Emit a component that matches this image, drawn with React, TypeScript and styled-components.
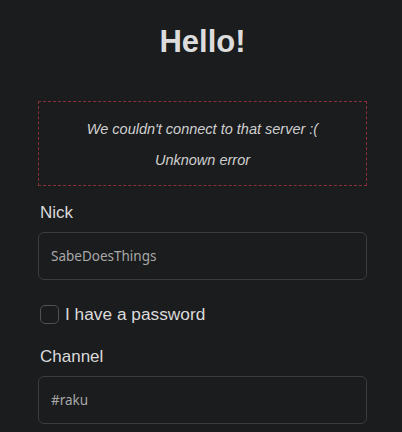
import React from "react";
import styled, { createGlobalStyle } from "styled-components";

const Global = createGlobalStyle`
  html, body { margin: 0; padding: 0; background: #1b1c1e; }
  body { font-family: "Liberation Sans", Arial, sans-serif; color: #d9d9d9; }
`;

const Page = styled.div`
  width: 329px;
  padding: 0 35px 0 38px;
  display: flex;
  flex-direction: column;
`;

const Title = styled.h1`
  margin: 26px 0 0;
  height: 32px;
  line-height: 32px;
  font-size: 31px;
  font-weight: 700;
  text-align: center;
  color: #dcdcdc;
`;

const ErrorBox = styled.div`
  margin-top: 43px;
  height: 85px;
  box-sizing: border-box;
  padding-top: 2px;
  border: 1px dashed #8a2f3a;
  display: flex;
  flex-direction: column;
  align-items: center;
  justify-content: center;
  gap: 15px;
`;

const ErrorLine = styled.p`
  margin: 0;
  font-style: italic;
  font-size: 14.5px;
  line-height: 16px;
  color: #cfcfcf;
`;

const Label = styled.label`
  display: block;
  padding-left: 2px;
  font-size: 17px;
  line-height: 20px;
  color: #dadada;
`;

const Field = styled.div<{ $top: number }>`
  margin-top: ${(p) => p.$top}px;
  display: flex;
  flex-direction: column;
  gap: 9px;
`;

const Input = styled.div`
  height: 48px;
  box-sizing: border-box;
  border: 1px solid #3b3c3e;
  border-radius: 6px;
  padding: 0 12px;
  display: flex;
  align-items: center;
  font-family: "Noto Sans", "Open Sans", sans-serif;
  font-size: 13.5px;
  color: #a8a8a8;
`;

const CheckRow = styled.div`
  margin-top: 24px;
  display: flex;
  align-items: center;
  gap: 6px;
  padding-left: 2px;
`;

const Box = styled.span`
  width: 19px;
  height: 19px;
  box-sizing: border-box;
  border: 1px solid #505154;
  border-radius: 5px;
`;

const CheckLabel = styled.span`
  font-size: 17.3px;
  line-height: 20px;
  color: #dadada;
`;

export default function App() {
  return (
    <>
      <Global />
      <Page>
        <Title>Hello!</Title>
        <ErrorBox>
          <ErrorLine>We couldn't connect to that server :(</ErrorLine>
          <ErrorLine>Unknown error</ErrorLine>
        </ErrorBox>
        <Field $top={17}>
          <Label>Nick</Label>
          <Input>SabeDoesThings</Input>
        </Field>
        <CheckRow>
          <Box />
          <CheckLabel>I have a password</CheckLabel>
        </CheckRow>
        <Field $top={23}>
          <Label>Channel</Label>
          <Input>#raku</Input>
        </Field>
      </Page>
    </>
  );
}
